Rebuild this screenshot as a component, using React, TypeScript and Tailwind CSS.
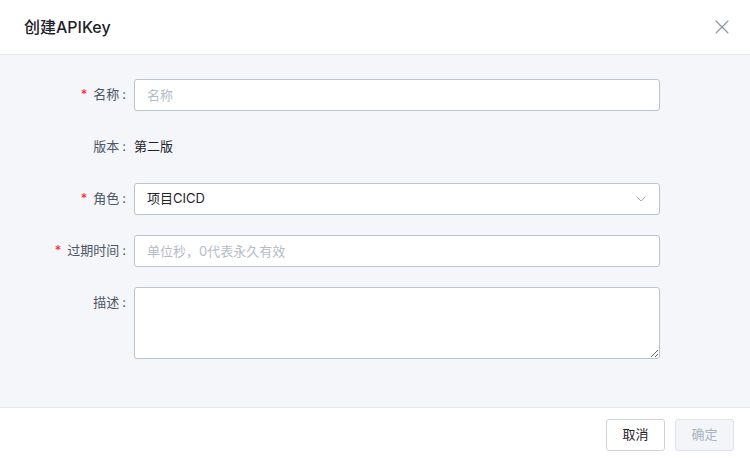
import { ChevronDown, X } from "lucide-react";

const font = { fontFamily: '"Inter", "Noto Sans CJK SC", sans-serif' };

function Label({ text, required }: { text: string; required?: boolean }) {
    return (
        <div className="w-[134px] shrink-0 pr-2 h-8 flex items-center justify-end text-[13px] text-[#4d5666]">
            {required && <span className="text-[#f5222d] mr-[6px]">*</span>}
            <span>{text}</span>
            <span className="ml-[3px]">:</span>
        </div>
    );
}

export default function App() {
    return (
        <div className="w-[750px] h-[461px] bg-white flex flex-col text-[#1f2329]" style={font}>
            {/* Header */}
            <div className="h-[55px] shrink-0 flex items-center justify-between pl-6 pr-4 border-b border-[#e3e6ea]">
                <h1 className="text-base font-medium text-[#1f2329]">创建APIKey</h1>
                <X className="w-6 h-6 text-[#8a94a6]" strokeWidth={1.1} />
            </div>

            {/* Body */}
            <div className="flex-1 bg-[#f5f6f9] pt-6 flex flex-col gap-5 border-b border-[#e3e6ea]">
                <div className="flex">
                    <Label text="名称" required />
                    <input
                        placeholder="名称"
                        className="w-[526px] h-8 rounded-[3px] border border-[#b9c4d0] bg-white px-3 text-[13px] placeholder:text-[#b5bcc8] outline-none"
                    />
                </div>
                <div className="flex">
                    <Label text="版本" />
                    <div className="h-8 flex items-center text-[13px] text-[#1f2329]">第二版</div>
                </div>
                <div className="flex">
                    <Label text="角色" required />
                    <div className="w-[526px] h-8 rounded-[3px] border border-[#b9c4d0] bg-white pl-3 pr-[10px] flex items-center justify-between text-[13px]">
                        <span>项目CICD</span>
                        <ChevronDown className="w-4 h-4 text-[#9aa3b2]" strokeWidth={1.3} />
                    </div>
                </div>
                <div className="flex">
                    <Label text="过期时间" required />
                    <input
                        placeholder="单位秒，0代表永久有效"
                        className="w-[526px] h-8 rounded-[3px] border border-[#b9c4d0] bg-white px-3 text-[13px] placeholder:text-[#b5bcc8] outline-none"
                    />
                </div>
                <div className="flex">
                    <Label text="描述" />
                    <textarea className="w-[526px] h-[72px] rounded-[3px] border border-[#b9c4d0] bg-white px-3 py-1.5 text-[13px] outline-none" />
                </div>
            </div>

            {/* Footer */}
            <div className="h-[53px] shrink-0 flex items-center justify-end gap-[10px] pr-4">
                <button className="w-[59px] h-8 rounded-[3px] border border-[#cdd4dc] bg-white text-[13px] text-[#1f2329]">
                    取消
                </button>
                <button className="w-[59px] h-8 rounded-[3px] border border-[#dde3ea] bg-[#f3f5f8] text-[13px] text-[#a9b3c0]">
                    确定
                </button>
            </div>
        </div>
    );
}
